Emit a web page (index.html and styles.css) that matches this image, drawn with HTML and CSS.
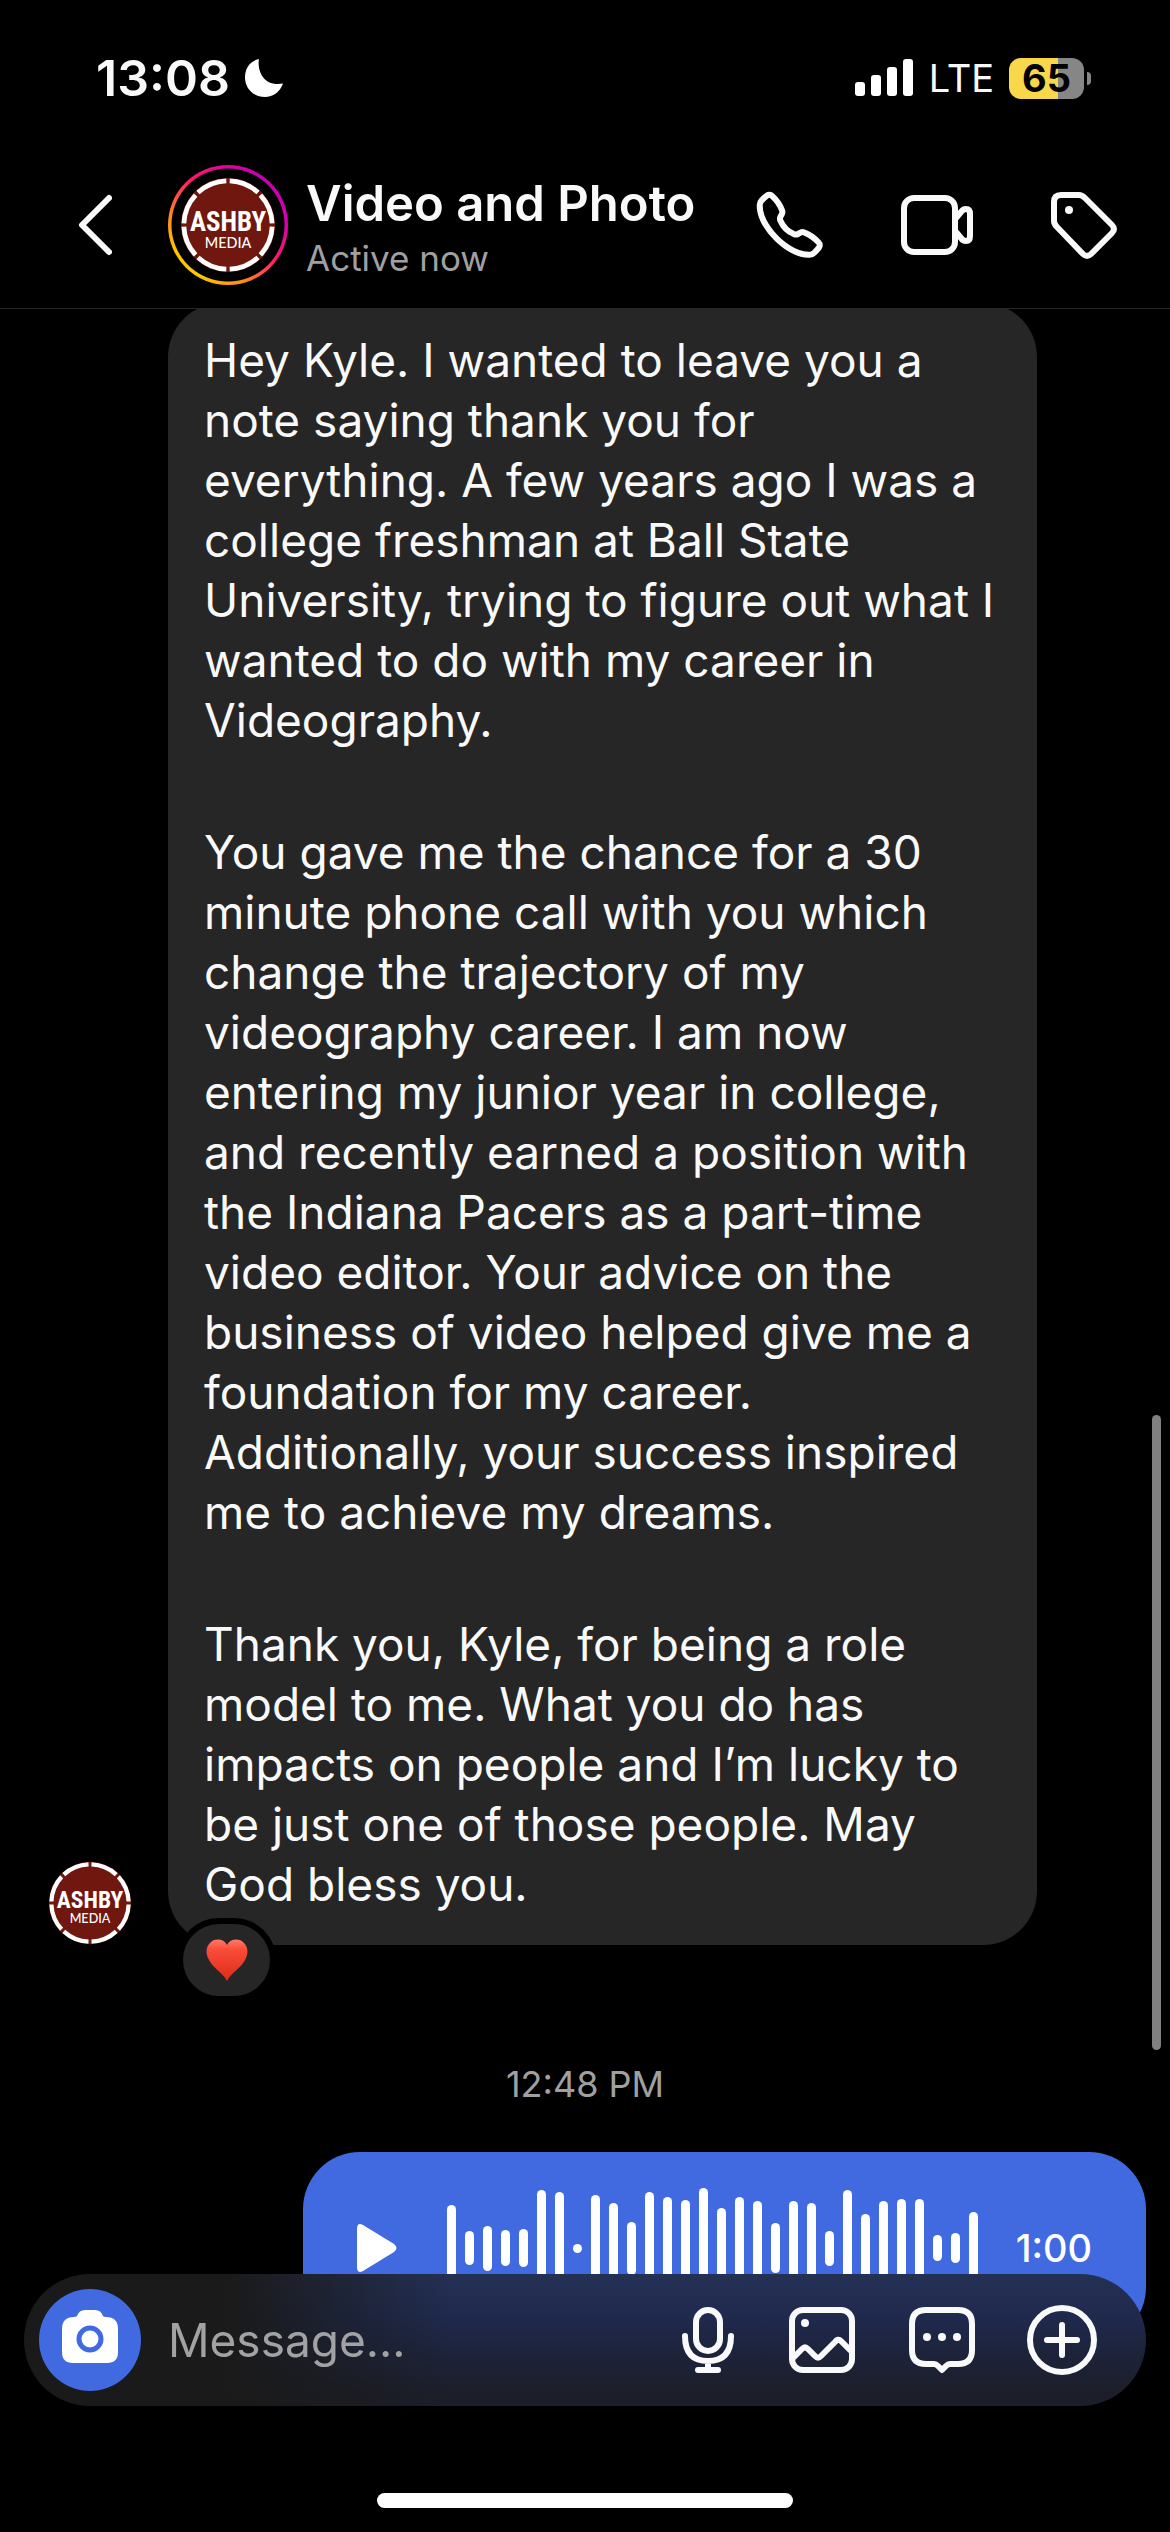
FILE: index.html
```html
<!DOCTYPE html>
<html lang="en">
<head>
<meta charset="utf-8">
<meta name="viewport" content="width=device-width, initial-scale=1">
<title>Video and Photo</title>
<link rel="stylesheet" href="styles.css">
</head>
<body>
<header class="top">
  <div class="status">
    <div class="status-group">
      <span class="clock">13:08</span>
      <svg class="moon" viewBox="0 0 40 40"><path d="M15 1C13 12 19 29 39 25.500C36 34 29 39 21 39C9 39 1 30 1 19.500C1 10 6 3 15 1Z" fill="#fff"/></svg>
    </div>
    <div class="status-group">
      <svg class="signal" viewBox="0 0 58 38" fill="#fff"><rect y="23" width="10" height="14" rx="3"/><rect x="16" y="16" width="10" height="21" rx="3"/><rect x="32" y="8" width="10" height="29" rx="3"/><rect x="48" width="10" height="37" rx="3"/></svg>
      <span class="network">LTE</span>
      <div class="battery"><span class="level">65</span><span class="nub"></span></div>
    </div>
  </div>
  <div class="bar">
    <button class="icon-btn back" aria-label="Back"><svg viewBox="0 0 34 62"><path d="M31 4L4 31L31 58"/></svg></button>
    <div class="ring">
      <svg class="ring-logo" viewBox="0 0 100 100">
        <circle cx="50" cy="50" r="49" fill="#701710"/>
        <circle cx="50" cy="50" r="46" fill="none" stroke="#fff" stroke-width="5" pathLength="80" stroke-dasharray="9 1" stroke-dashoffset="-0.5"/>
        <text class="logo-name" x="50" y="56" text-anchor="middle">ASHBY</text>
        <text class="logo-sub" x="50" y="74" text-anchor="middle">MEDIA</text>
      </svg>
    </div>
    <div class="who">
      <h1>Video and Photo</h1>
      <p>Active now</p>
    </div>
    <nav class="actions" aria-label="Chat actions">
      <button class="icon-btn" aria-label="Audio call"><svg viewBox="0 0 24 24"><path class="solid" d="M18.227 22.912c-4.913 0-9.286-3.627-11.486-5.828C4.486 14.830.731 10.291.921 5.231a3.289 3.289 0 0 1 .908-2.138 17.116 17.116 0 0 1 1.865-1.710 2.307 2.307 0 0 1 3.004.174 13.283 13.283 0 0 1 3.658 5.325 2.551 2.551 0 0 1-.190 1.941l-.455.853a.463.463 0 0 0-.024.387 7.570 7.570 0 0 0 4.077 4.075.455.455 0 0 0 .386-.024l.853-.455a2.548 2.548 0 0 1 1.940-.190 13.278 13.278 0 0 1 5.326 3.658 2.309 2.309 0 0 1 .174 3.003 17.319 17.319 0 0 1-1.710 1.866 3.290 3.290 0 0 1-2.138.910 10.270 10.270 0 0 1-.368.006Zm-13.144-20a.270.270 0 0 0-.167.054A15.121 15.121 0 0 0 3.280 4.470a1.289 1.289 0 0 0-.360.836c-.161 4.301 3.210 8.340 5.235 10.364s6.060 5.403 10.366 5.236a1.284 1.284 0 0 0 .835-.360 15.217 15.217 0 0 0 1.504-1.637.324.324 0 0 0-.047-.410 11.620 11.620 0 0 0-4.457-3.119.545.545 0 0 0-.411.044l-.854.455a2.452 2.452 0 0 1-2.071.116 9.571 9.571 0 0 1-5.189-5.188 2.457 2.457 0 0 1 .115-2.071l.456-.855a.544.544 0 0 0 .043-.410 11.629 11.629 0 0 0-3.118-4.458.360.360 0 0 0-.244-.100Z"/></svg></button>
      <button class="icon-btn" aria-label="Video call"><svg viewBox="0 0 72 72"><rect x="3" y="9" width="51" height="54" rx="10"/><path d="M55 29L60 23Q62 20 65 20Q69 20 69 25V47Q69 52 65 52Q62 52 60 49L55 43"/></svg></button>
      <button class="icon-btn" aria-label="Label"><svg viewBox="0 0 72 72"><path d="M13 6H31Q34 6 37 9L64 36Q68 40 64 44L43 65Q39 69 35 65L9 38Q6 35 6 32V13Q6 6 13 6Z"/><circle class="solid" cx="21" cy="21" r="4"/></svg></button>
    </nav>
  </div>
</header>

<main class="thread">
  <article class="incoming">
    <svg class="sender" viewBox="0 0 100 100">
      <circle cx="50" cy="50" r="49" fill="#701710"/>
      <circle cx="50" cy="50" r="46" fill="none" stroke="#fff" stroke-width="5" pathLength="80" stroke-dasharray="9 1" stroke-dashoffset="-0.5"/>
      <text class="logo-name" x="50" y="56" text-anchor="middle">ASHBY</text>
      <text class="logo-sub" x="50" y="74" text-anchor="middle">MEDIA</text>
    </svg>
    <div class="bubble">
      <p>Hey Kyle. I wanted to leave you a note saying thank you for everything. A few years ago I was a college freshman at Ball State University, trying to figure out what I wanted to do with my career in Videography.</p>
      <p>You gave me the chance for a 30 minute phone call with you which change the trajectory of my videography career. I am now entering my junior year in college, and recently earned a position with the Indiana Pacers as a part-time video editor. Your advice on the business of video helped give me a foundation for my career. Additionally, your success inspired me to achieve my dreams.</p>
      <p>Thank you, Kyle, for being a role model to me. What you do has impacts on people and I’m lucky to be just one of those people. May God bless you.</p>
      <button class="reaction" aria-label="Loved"><svg viewBox="0 0 42 42"><defs><linearGradient id="heart" x1="0" y1="0" x2="0" y2="1"><stop offset="0" stop-color="#ff7a68"/><stop offset=".25" stop-color="#fb4b39"/><stop offset="1" stop-color="#d92d18"/></linearGradient></defs><path fill="url(#heart)" d="M21 6C24 0 32-1 37 3C42 7 43 14 39 21C35 29 26 33 21 42C16 33 7 29 3 21C-1 14 0 7 5 3C10-1 18 0 21 6Z"/></svg></button>
    </div>
  </article>
  <time class="stamp">12:48 PM</time>
  <article class="voice">
    <button class="play" aria-label="Play"><svg viewBox="0 0 40 48"><path fill="#fff" d="M0 5Q0-2 6 1L37 20Q42 24 37 28L6 47Q0 50 0 43Z"/></svg></button>
    <div class="wave" aria-hidden="true">
      <i style="height:86px"></i><i style="height:34px"></i><i style="height:45px"></i><i style="height:36px"></i><i style="height:38px"></i><i style="height:117px"></i><i style="height:113px"></i><i style="height:9px"></i><i style="height:107px"></i><i style="height:91px"></i><i style="height:53px"></i><i style="height:113px"></i><i style="height:102px"></i><i style="height:97px"></i><i style="height:120px"></i><i style="height:80px"></i><i style="height:102px"></i><i style="height:95px"></i><i style="height:50px"></i><i style="height:95px"></i><i style="height:91px"></i><i style="height:35px"></i><i style="height:116px"></i><i style="height:69px"></i><i style="height:95px"></i><i style="height:99px"></i><i style="height:98px"></i><i style="height:26px"></i><i style="height:30px"></i><i style="height:72px"></i>
    </div>
    <span class="length">1:00</span>
  </article>
</main>
<div class="scrollbar" aria-hidden="true"></div>

<footer class="bottom">
  <form class="composer">
    <button type="button" class="camera" aria-label="Camera"><svg viewBox="0 0 56 54"><path fill="#fff" d="M15 6Q17 0 23 0H33Q39 0 41 6Q42 7 44 7Q56 7 56 19V42Q56 53 45 53H11Q0 53 0 42V19Q0 7 12 7Q14 7 15 6Z"/><circle cx="28" cy="29" r="11" fill="#fff" stroke="#416ae1" stroke-width="5"/></svg></button>
    <input class="field" type="text" placeholder="Message..." aria-label="Message">
    <button type="button" class="icon-btn mic" aria-label="Voice message"><svg viewBox="0 0 60 72"><rect x="18" y="6" width="24" height="41" rx="12"/><path d="M7 32Q7 57 30 57Q53 57 53 32M30 57V66M20 66H40"/></svg></button>
    <button type="button" class="icon-btn" aria-label="Photos"><svg viewBox="0 0 72 72"><rect x="6" y="6" width="60" height="60" rx="11"/><circle class="solid" cx="19" cy="19" r="4"/><path d="M7 54L16 45Q19 42 22 45L29 52Q32 55 35 52L49 38Q52 34 55 37L65 47"/></svg></button>
    <button type="button" class="icon-btn" aria-label="Stickers"><svg viewBox="0 0 72 72"><path d="M20 6H52Q66 6 66 20V46Q66 60 52 60H44Q42 60 40 62L36 66L32 62Q30 60 28 60H20Q6 60 6 46V20Q6 6 20 6Z"/><g class="solid"><circle cx="21" cy="33" r="4"/><circle cx="36" cy="33" r="4"/><circle cx="51" cy="33" r="4"/></g></svg></button>
    <button type="button" class="icon-btn" aria-label="More"><svg viewBox="0 0 72 72"><circle cx="36" cy="36" r="32"/><path d="M36 21V51M21 36H51"/></svg></button>
  </form>
  <div class="home" aria-hidden="true"></div>
</footer>
</body>
</html>
```
FILE: styles.css
```css
* { box-sizing: border-box; }

body {
  margin: 0;
  min-height: 100vh;
  background: #000;
  color: #f9f9f9;
  font-family: Inter, "Liberation Sans", sans-serif;
}

h1, p { margin: 0; }

button {
  padding: 0;
  border: 0;
  background: none;
  color: inherit;
  font: inherit;
  flex: none;
}

svg { display: block; }

.logo-name {
  font: 700 28px "Liberation Sans Narrow", "Roboto Condensed", "Liberation Sans", sans-serif;
  fill: #fff;
}
.logo-sub { font: 500 15px Lato, sans-serif; fill: #fff; }

/* Header */
.top {
  position: sticky;
  top: 0;
  z-index: 2;
  background: #000;
  border-bottom: 1px solid #262626;
}

.status {
  display: flex;
  justify-content: space-between;
  align-items: center;
  height: 156px;
  padding: 0 86px 0 96px;
}
.status-group { display: flex; align-items: center; }
.clock { font-size: 50px; font-weight: 600; line-height: 60px; margin-right: 14px; }
.moon { width: 40px; height: 40px; }
.signal { width: 58px; height: 38px; }
.network { margin: 0 15px 0 16px; font-size: 38px; line-height: 48px; }

.battery {
  position: relative;
  width: 75px;
  height: 41px;
  border-radius: 12px;
  background: linear-gradient(to right, #f8d84a 65%, #868686 65%);
  color: #000;
  text-align: center;
}
.level { font-size: 38px; font-weight: 700; line-height: 41px; }
.nub {
  position: absolute;
  top: 14px;
  right: -7px;
  width: 4px;
  height: 13px;
  border-radius: 0 4px 4px 0;
  background: #868686;
}

.bar {
  display: flex;
  align-items: center;
  padding: 9px 50px 23px 78px;
}

.icon-btn svg {
  width: 72px;
  height: 72px;
  fill: none;
  stroke: currentColor;
  stroke-width: 6;
  stroke-linecap: round;
  stroke-linejoin: round;
}
.icon-btn .solid { fill: currentColor; stroke: none; }
.back { margin-right: 56px; }
.back svg { width: 34px; height: 62px; }

.ring {
  flex: none;
  padding: 12px;
  border-radius: 50%;
  background:
    radial-gradient(circle, #000 56px, transparent 57px),
    conic-gradient(from 30deg, #c800b4, #d800b0 60deg, #ff1a68 95deg, #ff8a1a 135deg, #ffc800 180deg, #ffc400 215deg, #ff8a1a 250deg, #ff1a68 290deg, #e000a0 330deg, #c800b4);
}
.ring-logo { width: 96px; height: 96px; }

.who { flex: 1; min-width: 0; margin-left: 18px; padding-top: 6px; white-space: nowrap; }
.who h1 { font-size: 49px; font-weight: 600; line-height: 60px; }
.who p { font-size: 35px; line-height: 48px; color: #a0a0a0; }
.actions { display: flex; gap: 75px; }

/* Conversation */
.thread {
  display: flex;
  flex-direction: column;
  margin-top: -6px;
  padding: 0 24px 180px;
}

.incoming { display: flex; align-items: flex-end; gap: 36px; padding-left: 24px; }
.sender { flex: none; width: 84px; height: 84px; }

.bubble {
  position: relative;
  max-width: 869px;
  padding: 27px 36px 31px;
  border-radius: 54px;
  background: #262626;
  font-size: 46px;
  line-height: 60px;
}
.bubble p + p { margin-top: 72px; }

.reaction {
  position: absolute;
  left: 9px;
  bottom: -57px;
  display: grid;
  place-items: center;
  width: 99px;
  height: 84px;
  border: 6px solid #000;
  border-radius: 42px;
  background: #262626;
}
.reaction svg { width: 42px; height: 42px; }

.stamp {
  align-self: center;
  margin-top: 115px;
  font-size: 36px;
  line-height: 48px;
  color: #a0a0a0;
}

.voice {
  display: flex;
  align-items: center;
  align-self: flex-end;
  width: 843px;
  max-width: 100%;
  height: 192px;
  margin-top: 44px;
  padding: 0 54px;
  border-radius: 57px;
  background: #416ae1;
  color: #fff;
}
.play svg { width: 40px; height: 48px; }
.wave { display: flex; align-items: center; gap: 9px; margin-left: 50px; }
.wave i { width: 9px; border-radius: 5px; background: #fff; }
.length { margin-left: auto; font-size: 38px; font-weight: 500; }

.scrollbar {
  position: fixed;
  right: 9px;
  bottom: 482px;
  width: 9px;
  height: 635px;
  border-radius: 5px;
  background: #808080;
}

/* Composer */
.bottom {
  position: fixed;
  right: 0;
  bottom: 0;
  left: 0;
  z-index: 2;
  padding: 0 24px 24px;
}
.composer {
  display: flex;
  align-items: center;
  gap: 48px;
  height: 132px;
  padding: 0 48px 0 15px;
  border-radius: 66px;
  background:
    linear-gradient(to right, #1a1a1a 18%, transparent 38%),
    linear-gradient(to bottom, #243054, #1f2a4e 30%, #1d2238 65%, #1c1e29 90%);
}
.camera {
  display: grid;
  place-items: center;
  width: 102px;
  height: 102px;
  border-radius: 50%;
  background: #416ae1;
}
.camera svg { width: 56px; height: 54px; margin-bottom: 6px; }
.mic svg { width: 60px; }
.field {
  flex: 1;
  min-width: 0;
  margin-left: -21px;
  padding: 0;
  border: 0;
  outline: 0;
  background: none;
  color: #f9f9f9;
  font: 46px/60px Inter, "Liberation Sans", sans-serif;
}
.field::placeholder { color: #a2a2a4; opacity: 1; }

.home {
  width: 416px;
  height: 15px;
  margin: 87px auto 0;
  border-radius: 8px;
  background: #fff;
}
```
